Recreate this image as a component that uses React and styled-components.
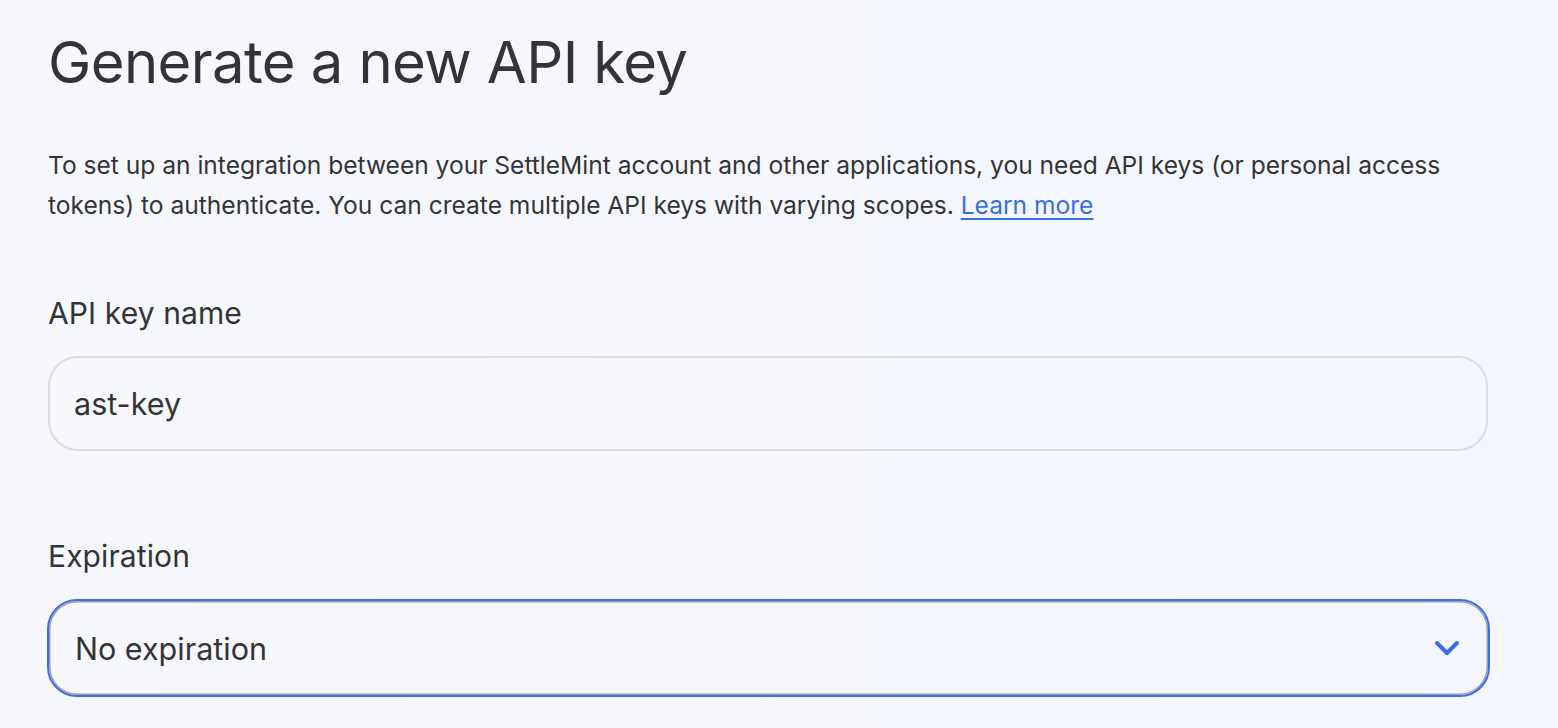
import React from "react";
import styled, { createGlobalStyle } from "styled-components";

const GlobalStyle = createGlobalStyle`
  html, body {
    margin: 0;
    padding: 0;
  }
  body {
    background: linear-gradient(90deg, #f7f8fc 0%, #f3f6fe 100%);
    font-family: Inter, "Noto Sans", sans-serif;
    color: #333436;
  }
`;

const Page = styled.div`
  width: 1558px;
  height: 728px;
  box-sizing: border-box;
  padding: 26px 70px 0 48px;
  overflow: hidden;
`;

const Title = styled.h1`
  margin: 0;
  font-size: 58px;
  font-weight: 400;
  line-height: 72px;
  letter-spacing: -0.6px;
  color: #333436;
`;

const Intro = styled.p`
  margin: 47px 0 0;
  font-size: 24.6px;
  line-height: 40px;
  letter-spacing: -0.02px;
  color: #333436;
`;

const Link = styled.a`
  color: #3a6ee8;
  text-decoration: underline;
  text-underline-offset: 4px;
`;

const Field = styled.div`
  display: flex;
  flex-direction: column;
  gap: 25px;
  margin-top: ${(p) => p.$top}px;
`;

const Label = styled.label`
  font-size: 30px;
  line-height: 36px;
  letter-spacing: 0.1px;
  color: #333436;
`;

const Input = styled.div`
  box-sizing: border-box;
  height: 95px;
  border: 2px solid #dcdde2;
  border-radius: 30px;
  padding: 0 24px;
  display: flex;
  align-items: center;
  font-size: 30.5px;
  color: #333436;
`;

const Select = styled(Input)`
  height: 98px;
  margin-left: -1px;
  margin-right: -2px;
  border: 2px solid #3a6ee8;
  box-shadow: inset 0 0 0 1.5px #a0a0a4;
  justify-content: space-between;
  padding: 0 28px 0 26px;
`;

const Chevron = () => (
  <svg width="26" height="16" viewBox="0 0 26 16" fill="none">
    <path
      d="M3 3l10 10 10-10"
      stroke="#3a6ee8"
      strokeWidth="4"
      strokeLinecap="round"
      strokeLinejoin="round"
    />
  </svg>
);

export default function App() {
  return (
    <>
      <GlobalStyle />
      <Page>
        <Title>Generate a new API key</Title>
        <Intro>
          To set up an integration between your SettleMint account and other
          applications, you need API keys (or personal access tokens) to
          authenticate. You can create multiple API keys with varying scopes.{" "}
          <Link href="#">Learn more</Link>
        </Intro>
        <Field $top={70}>
          <Label>API key name</Label>
          <Input>ast-key</Input>
        </Field>
        <Field $top={87}>
          <Label>Expiration</Label>
          <Select>
            No expiration
            <Chevron />
          </Select>
        </Field>
      </Page>
    </>
  );
}
